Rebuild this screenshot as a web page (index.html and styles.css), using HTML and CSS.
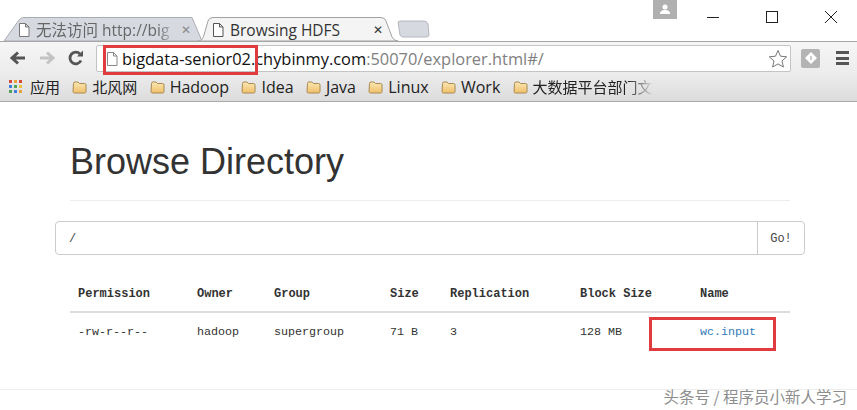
FILE: index.html
```html
<!DOCTYPE html>
<html lang="zh">
<head>
<meta charset="utf-8">
<title>Browsing HDFS</title>
<link rel="stylesheet" href="styles.css">
</head>
<body>
<div class="window">
  <header class="chrome">
    <div class="tabstrip">
      <svg class="tabshapes" width="440" height="24" viewBox="0 0 440 24">
        <path d="M4 24 L19 3 Q21 .5 24 .5 L192 .5 L202 24Z" fill="#d6dae0" stroke="#a9acb2"/>
        <path d="M198 24 C202 24 203 21 204 18 L208 4 Q209 .5 213 .5 L381 .5 Q385 .5 386 4 L392 20 Q394 24 398 24Z" fill="#f4f4f4" stroke="#a2a2a2"/>
        <path d="M398 5 Q399 4 401 4 L424 4 Q427 4 428 7 L429 18 Q429 20 426 20 L403 20 Q401 20 400 18Z" fill="#d6dae0" stroke="#b4b8be"/>
      </svg>
      <div class="tab tab-inactive">
        <svg class="page-icon" width="14" height="16" viewBox="0 0 14 16"><path d="M2.5 1.500h6l3.500 3.500v9.500h-9.500zM8.500 1.500v3.500h3.500" fill="#fff" stroke="#777"/></svg>
        <span class="tab-title fade">无法访问 http://big</span>
        <span class="tab-close muted">✕</span>
      </div>
      <div class="tab tab-active">
        <svg class="page-icon" width="14" height="16" viewBox="0 0 14 16"><path d="M2.500 1.500h6l3.500 3.500v9.500h-9.500zM8.500 1.500v3.500h3.500" fill="#fff" stroke="#555"/></svg>
        <span class="tab-title">Browsing HDFS</span>
        <span class="tab-close">✕</span>
      </div>
      <div class="winbar">
        <div class="avatar">
          <svg width="12" height="11" viewBox="0 0 12 11"><circle cx="6" cy="3" r="2.500" fill="#fff"/><path d="M1 10c0-3 2-4 5-4s5 1 5 4z" fill="#fff"/></svg>
        </div>
        <div class="wincontrols">
          <svg width="14" height="14" viewBox="0 0 14 14"><path d="M1 7.500h12" stroke="#222" stroke-width="1"/></svg>
          <svg width="14" height="14" viewBox="0 0 14 14"><rect x="1.500" y="1.500" width="11" height="11" fill="none" stroke="#222"/></svg>
          <svg width="14" height="14" viewBox="0 0 14 14"><path d="M1 1l12 12M13 1L1 13" stroke="#222" fill="none"/></svg>
        </div>
      </div>
    </div>
    <div class="toolbar">
      <div class="navs">
        <svg width="18" height="16" viewBox="0 0 18 16"><path d="M16 8H4M9 2.500L3 8l6 5.500" fill="none" stroke="#555" stroke-width="3"/></svg>
        <svg width="18" height="16" viewBox="0 0 18 16"><path d="M2 8h12M9 2.500L15 8l-6 5.500" fill="none" stroke="#c3c3c3" stroke-width="3"/></svg>
        <svg width="18" height="18" viewBox="0 0 18 18"><path d="M14 11.500A5.800 5.800 0 1 1 13 5" fill="none" stroke="#555" stroke-width="2.800"/><path d="M10 7.500h6v-6z" fill="#555"/></svg>
      </div>
      <div class="omnibox">
        <svg class="omni-page" width="14" height="16" viewBox="0 0 14 16"><path d="M2.500 1.500h6l3.500 3.500v9.500h-9.500zM8.500 1.500v3.500h3.500" fill="#fff" stroke="#888"/></svg>
        <span class="url"><span class="host">bigdata-senior02.chybinmy.com</span>:50070/explorer.html#/</span>
        <svg class="star" width="20" height="20" viewBox="0 0 20 20"><path d="M10 1.500l2.500 5.700 6.200.6-4.700 4.100 1.400 6.100L10 14.900l-5.400 3.100L6 11.900 1.300 7.800l6.200-.6z" fill="#fff" stroke="#777"/></svg>
      </div>
      <div class="ext">
        <svg width="12" height="12" viewBox="0 0 12 12"><path d="M6 0l6 6-6 6-6-6z" fill="#fff"/><path d="M6 4v4" stroke="#bbb" stroke-width="1.500"/></svg>
      </div>
      <div class="menu"><i></i><i></i><i></i></div>
    </div>
    <nav class="bookmarks">
      <span class="bm cjk">
        <svg class="apps" width="14" height="14" viewBox="0 0 14 14">
          <rect x="0" y="0" width="3" height="3" fill="#d9473f"/><rect x="5" y="0" width="3" height="3" fill="#e8a33b"/><rect x="10" y="0" width="3" height="3" fill="#d9473f"/>
          <rect x="0" y="5" width="3" height="3" fill="#3f7fd9"/><rect x="5" y="5" width="3" height="3" fill="#4da356"/><rect x="10" y="5" width="3" height="3" fill="#e8c33b"/>
          <rect x="0" y="10" width="3" height="3" fill="#4da356"/><rect x="5" y="10" width="3" height="3" fill="#3f7fd9"/><rect x="10" y="10" width="3" height="3" fill="#e8a33b"/>
        </svg>应用</span>
      <span class="bm cjk"><svg class="folder" width="15" height="13" viewBox="0 0 15 13"><use href="#f"/></svg>北风网</span>
      <span class="bm"><svg class="folder" width="15" height="13" viewBox="0 0 15 13"><use href="#f"/></svg>Hadoop</span>
      <span class="bm"><svg class="folder" width="15" height="13" viewBox="0 0 15 13"><use href="#f"/></svg>Idea</span>
      <span class="bm"><svg class="folder" width="15" height="13" viewBox="0 0 15 13"><use href="#f"/></svg>Java</span>
      <span class="bm"><svg class="folder" width="15" height="13" viewBox="0 0 15 13"><use href="#f"/></svg>Linux</span>
      <span class="bm"><svg class="folder" width="15" height="13" viewBox="0 0 15 13"><use href="#f"/></svg>Work</span>
      <span class="bm cjk"><svg class="folder" width="15" height="13" viewBox="0 0 15 13"><use href="#f"/></svg><span class="bm-fade">大数据平台部门文</span></span>
      <svg width="0" height="0" class="defs"><defs>
        <linearGradient id="fg" x1="0" y1="0" x2="0" y2="1"><stop offset="0" stop-color="#fbe7b4"/><stop offset="1" stop-color="#efc069"/></linearGradient>
        <path id="f" d="M1.500 2.500q0-1.500 1.500-1.500h3l1.500 1.500h5q1.500 0 1.500 1.500v6.500q0 1.500-1.500 1.500h-10q-1.500 0-1.500-1.500z" fill="url(#fg)" stroke="#a88a52"/>
      </defs></svg>
    </nav>
  </header>

  <main class="page">
    <div class="container">
      <h1 class="title">Browse Directory</h1>
      <div class="inputgroup">
        <div class="pathinput">/</div>
        <div class="gobtn">Go!</div>
      </div>
      <table class="files">
        <colgroup>
          <col class="c1"><col class="c2"><col class="c3"><col class="c4"><col class="c5"><col class="c6"><col class="c7">
        </colgroup>
        <thead>
          <tr><th>Permission</th><th>Owner</th><th>Group</th><th>Size</th><th>Replication</th><th>Block Size</th><th>Name</th></tr>
        </thead>
        <tbody>
          <tr><td>-rw-r--r--</td><td>hadoop</td><td>supergroup</td><td>71 B</td><td>3</td><td>128 MB</td><td><a class="filelink" href="#">wc.input</a></td></tr>
        </tbody>
      </table>
    </div>
    <div class="footer-rule"></div>
  </main>

  <div class="redbox box-url"></div>
  <div class="redbox box-file"></div>
  <div class="watermark">头条号 / 程序员小新人学习</div>
</div>
</body>
</html>
```
FILE: styles.css
```css
* { box-sizing: border-box; }
html, body { margin: 0; padding: 0; background: #fff; }
body { font-family: "Open Sans", "Noto Sans CJK SC", sans-serif; color: #222; }
.window { position: relative; width: 857px; height: 410px; overflow: hidden; }

/* browser chrome */
.tabstrip { position: relative; display: flex; height: 41px; padding: 18px 0 0 5px; background: #fff; }
.tabshapes { position: absolute; left: 0; top: 17px; }
.tab { position: relative; display: flex; align-items: center; height: 23px; font-size: 15.500px; font-family: "Open Sans", "Noto Sans CJK SC", sans-serif; }
.tab-inactive { width: 191px; padding-left: 12px; color: #666; }
.tab-active { width: 196px; padding-left: 15px; color: #333; }
.page-icon { flex: none; margin-right: 5px; }
.tab-title { flex: none; white-space: nowrap; }
.tab-inactive .tab-title { width: 144px; }
.tab-active .tab-title { width: 142px; }
.fade { -webkit-mask-image: linear-gradient(to right, #000 122px, transparent 140px); mask-image: linear-gradient(to right, #000 122px, transparent 140px); }
.tab-close { font-size: 12px; line-height: 1; margin-left: 1px; color: #333; font-family: "DejaVu Sans", sans-serif; font-weight: bold; }
.tab-close.muted { color: #8a8a8a; }

.winbar { position: absolute; top: 0; right: 0; width: 204px; height: 41px; display: flex; align-items: flex-start; }
.avatar { width: 24px; height: 19px; background: #b0b0b0; display: flex; align-items: center; justify-content: center; }
.wincontrols { display: flex; gap: 45px; margin: 10px 0 0 29px; }

.toolbar { display: flex; align-items: center; height: 33px; border-top: 1px solid #a6a6a6; background: linear-gradient(#f6f6f6, #ececec); padding: 0 0 0 9px; }
.navs { display: flex; align-items: center; gap: 11px; width: 87px; flex: none; }
.omnibox { display: flex; align-items: center; width: 695px; height: 27px; margin-top: 1px; border: 1px solid #c4c4c4; border-radius: 2px; background: #fff; padding: 0 2px 0 8px; flex: none; }
.omni-page { flex: none; margin-right: 3px; }
.url { flex: 1; font-size: 16.400px; line-height: 25px; color: #808080; white-space: nowrap; }
.host { color: #111; }
.star { flex: none; }
.ext { width: 19px; height: 19px; margin-left: 10px; background: #b4b4b4; border-radius: 2px; display: flex; align-items: center; justify-content: center; flex: none; }
.menu { display: flex; flex-direction: column; gap: 2.500px; margin-left: 16px; width: 13px; flex: none; }
.menu i { display: block; height: 3px; background: #555; }

.bookmarks { display: flex; align-items: center; height: 28px; padding: 0 0 1px 9px; gap: 12.300px; font-size: 16px; color: #222; background: linear-gradient(#ececec, #dcdcdc); border-bottom: 1px solid #a9a9a9; }
.bm { display: flex; align-items: center; white-space: nowrap; line-height: 20px; }
.cjk { font-size: 15px; }
.apps { margin-right: 7px; }
.folder { margin-right: 5px; flex: none; }
.bm-fade { -webkit-mask-image: linear-gradient(to right, #000 95px, transparent 120px); mask-image: linear-gradient(to right, #000 95px, transparent 120px); }
.defs { position: absolute; }

/* page */
.page { height: 308px; background: #fff; }
.container { width: 750px; margin-left: 55px; }
.title { margin: 0 15px; padding: 40px 0 19px; height: 99px; border-bottom: 1px solid #eee; font: 500 36px/39.600px "Liberation Sans", Arial, sans-serif; color: #333; }
.inputgroup { display: flex; height: 34px; margin-top: 20px; border: 1px solid #ccc; border-radius: 4px; font: 12px/34px "Liberation Mono", monospace; color: #444; }
.pathinput { flex: 1; padding-left: 13px; }
.gobtn { width: 47px; border-left: 1px solid #ccc; text-align: center; }
.files { width: 720px; margin: 21px 15px 0; border-collapse: collapse; table-layout: fixed; font-family: "Liberation Mono", monospace; color: #333; }
.c1 { width: 119px; } .c2 { width: 77px; } .c3 { width: 116px; } .c4 { width: 60px; }
.c5 { width: 130px; } .c6 { width: 120px; } .c7 { width: 98px; }
.files th { text-align: left; font-size: 12px; font-weight: bold; padding: 8px; height: 36px; border-bottom: 2px solid #ddd; white-space: nowrap; }
.files td { font-size: 11.700px; padding: 9px 8px 8px; height: 38px; white-space: nowrap; }
.filelink { color: #337ab7; text-decoration: none; }
.footer-rule { margin-top: 39px; border-top: 1px solid #eee; }

/* annotations laid over the screenshot */
.redbox { position: absolute; border: 3px solid #e03c40; pointer-events: none; }
.box-url { left: 103px; top: 45px; width: 155px; height: 30px; }
.box-file { left: 649px; top: 317px; width: 127px; height: 34px; }
.watermark { position: absolute; right: 10px; top: 385px; font-size: 15.500px; line-height: 22px; white-space: nowrap; color: #8d8d8d; font-family: "Noto Sans CJK SC", sans-serif; text-shadow: 0 0 2px #fff, 0 0 2px #fff; }
```
